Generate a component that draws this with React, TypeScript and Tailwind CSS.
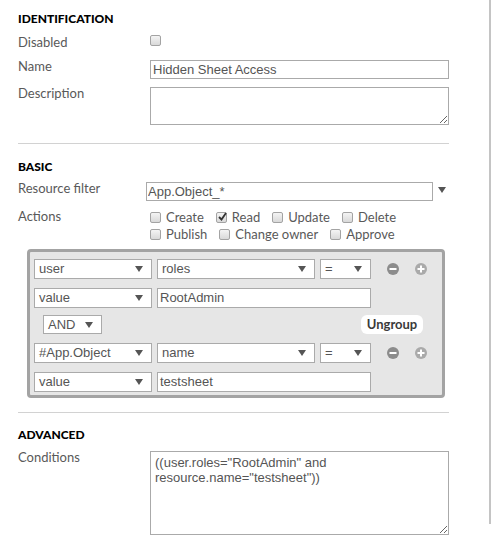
import React from "react";

const LABEL = "text-[13px] leading-[16px] text-[#595959] [font-family:Lato,'Noto_Sans',sans-serif]";
const HEADING =
  "text-[12px] leading-[16px] font-black text-black uppercase [font-family:Lato,'Noto_Sans',sans-serif]";
const FIELD = "[font-family:'Liberation_Sans',Arial,sans-serif] text-[13px] text-[#555]";

function Checkbox({ checked = false }: { checked?: boolean }) {
  return (
    <span className="relative flex h-[11px] w-[11px] shrink-0 items-center justify-center rounded-[2px] border border-[#a3a3a3] bg-gradient-to-b from-[#f4f4f4] to-[#d9d9d9]">
      {checked && (
        <svg width="9" height="9" viewBox="0 0 9 9" className="absolute -top-[1px] left-[1px]">
          <path d="M1 5 L3.5 7.5 L8 1" fill="none" stroke="#333" strokeWidth="1.8" />
        </svg>
      )}
    </span>
  );
}

function Check({ label, checked }: { label: string; checked?: boolean }) {
  return (
    <span className="flex items-center gap-[5px]">
      <Checkbox checked={checked} />
      <span className={LABEL}>{label}</span>
    </span>
  );
}

function Triangle() {
  return (
    <svg width="8" height="6" viewBox="0 0 8 6">
      <path d="M0 0 H8 L4 6 Z" fill="#555" />
    </svg>
  );
}

function Select({ value, width }: { value: string; width: string }) {
  return (
    <div
      className={`flex h-[20px] shrink-0 items-center justify-between border border-[#aaa] bg-white pl-[4px] pr-[8px] ${width} ${FIELD}`}
    >
      <span className="leading-[18px]">{value}</span>
      <Triangle />
    </div>
  );
}

function TextBox({ value, width }: { value: string; width: string }) {
  return (
    <div
      className={`flex h-[20px] shrink-0 items-center border border-[#aaa] bg-white pl-[2px] ${width} ${FIELD}`}
    >
      {value}
    </div>
  );
}

function CircleIcon({ plus, color }: { plus?: boolean; color: string }) {
  return (
    <svg width="12" height="12" viewBox="0 0 12 12">
      <circle cx="6" cy="6" r="6" fill={color} />
      <rect x="2.5" y="5" width="7" height="2" fill="white" />
      {plus && <rect x="5" y="2.5" width="2" height="7" fill="white" />}
    </svg>
  );
}

function ConditionRow({ a, b }: { a: string; b: string }) {
  return (
    <div className="flex items-center gap-[5px]">
      <Select value={a} width="w-[118px]" />
      <Select value={b} width="w-[158px]" />
      <Select value="=" width="w-[51px]" />
      <div className="ml-[11px] flex items-center gap-[16px]">
        <CircleIcon color="#8c8c8c" />
        <CircleIcon plus color="#aaaaaa" />
      </div>
    </div>
  );
}

function ValueRow({ value }: { value: string }) {
  return (
    <div className="flex items-center gap-[5px]">
      <Select value="value" width="w-[118px]" />
      <TextBox value={value} width="w-[214px]" />
    </div>
  );
}

export default function App() {
  return (
    <div className="flex h-[540px] w-[491px] overflow-hidden bg-white">
      <div className="w-[489px] shrink-0 pl-[18px]">
        <div className={`mt-[11px] ${HEADING}`}>Identification</div>

        <div className="mt-[7px] flex h-[16px]">
          <span className={`w-[132px] shrink-0 ${LABEL}`}>Disabled</span>
          <span className="mt-[1px]">
            <Checkbox />
          </span>
        </div>

        <div className="mt-[8px] flex">
          <span className={`w-[132px] shrink-0 ${LABEL}`}>Name</span>
          <input
            readOnly
            defaultValue="Hidden Sheet Access"
            className={`mt-[2px] h-[19px] w-[299px] border border-[#aaa] px-[2px] outline-none ${FIELD}`}
          />
        </div>

        <div className="mt-[6px] flex">
          <span className={`w-[132px] shrink-0 ${LABEL}`}>Description</span>
          <textarea
            readOnly
            className={`mt-[2px] h-[38px] w-[299px] border border-[#aaa] p-[3px] outline-none ${FIELD}`}
          />
        </div>

        <div className="mt-[18px] h-px w-[431px] bg-[#d2d2d2]" />

        <div className={`mt-[15px] ${HEADING}`}>Basic</div>

        <div className="mt-[5px] flex">
          <span className={`w-[128px] shrink-0 ${LABEL}`}>Resource filter</span>
          <input
            readOnly
            defaultValue="App.Object_*"
            className={`mt-[2px] h-[19px] w-[287px] border border-[#aaa] px-[1px] outline-none ${FIELD}`}
          />
          <span className="ml-[5px] mt-[7px]">
            <Triangle />
          </span>
        </div>

        <div className="mt-[7px] flex">
          <span className={`w-[132px] shrink-0 ${LABEL}`}>Actions</span>
          <div className="mt-[1px] flex flex-col">
            <div className="flex gap-[12px]">
              <Check label="Create" />
              <Check label="Read" checked />
              <Check label="Update" />
              <Check label="Delete" />
            </div>
            <div className="mt-[1px] flex gap-[12px]">
              <Check label="Publish" />
              <Check label="Change owner" />
              <Check label="Approve" />
            </div>
          </div>
        </div>

        <div className="ml-[9px] mt-[7px] w-[418px] rounded-[4px] border-[3px] border-[#a3a3a3] bg-[#e6e6e6] pb-[3px] pl-[4px] pt-[7px]">
          <ConditionRow a="user" b="roles" />
          <div className="mt-[9px]">
            <ValueRow value="RootAdmin" />
          </div>
          <div className="mt-[7px] flex h-[19px] items-center">
            <div
              className={`ml-[9px] flex h-[19px] w-[59px] items-center justify-between border border-[#aaa] bg-white pl-[4px] pr-[8px] ${FIELD}`}
            >
              <span>AND</span>
              <Triangle />
            </div>
            <div className="ml-[259px] flex h-[19px] w-[62px] items-center justify-center rounded-[6px] bg-white text-[13px] font-bold text-[#3a3a3a] [font-family:Lato,sans-serif]">
              Ungroup
            </div>
          </div>
          <div className="mt-[9px]">
            <ConditionRow a="#App.Object" b="name" />
          </div>
          <div className="mt-[9px]">
            <ValueRow value="testsheet" />
          </div>
        </div>

        <div className="mt-[14px] h-px w-[431px] bg-[#d2d2d2]" />

        <div className={`mt-[14px] ${HEADING}`}>Advanced</div>

        <div className="mt-[6px] flex">
          <span className={`w-[132px] shrink-0 ${LABEL}`}>Conditions</span>
          <textarea
            readOnly
            defaultValue={'((user.roles="RootAdmin" and\nresource.name="testsheet"))'}
            className={`mt-[2px] h-[84px] w-[299px] border border-[#aaa] px-[4px] py-[3px] leading-[15px] outline-none ${FIELD}`}
          />
        </div>
      </div>
      <div className="h-[524px] w-[2px] shrink-0 bg-[#c4c4c4]" />
    </div>
  );
}
